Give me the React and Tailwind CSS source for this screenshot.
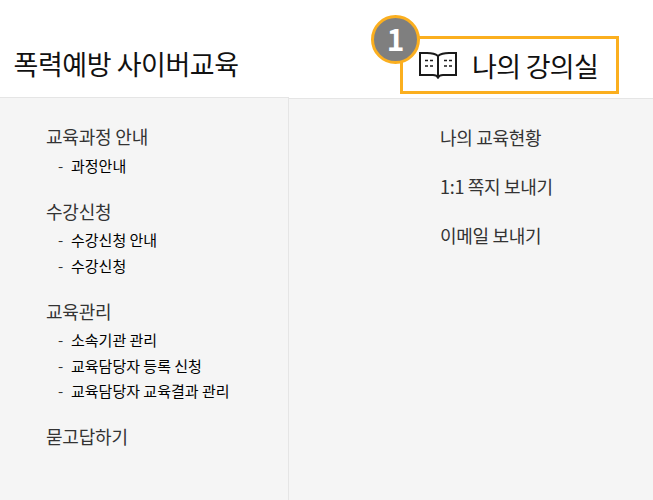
const FONT = "font-['Noto_Sans_CJK_KR','Noto_Sans',sans-serif]";

const GROUPS = [
  { title: "교육과정 안내", items: ["과정안내"] },
  { title: "수강신청", items: ["수강신청 안내", "수강신청"] },
  { title: "교육관리", items: ["소속기관 관리", "교육담당자 등록 신청", "교육담당자 교육결과 관리"] },
  { title: "묻고답하기", items: [] },
];

function BookIcon() {
  return (
    <svg width="38" height="27" viewBox="0 0 38 27" fill="none" stroke="#1a1a1a" strokeWidth="2">
      <path d="M19 4 C16 1.5 12 1 8 1 H1 V23 H14 C16 23 18 23.5 19 25.5 C20 23.5 22 23 24 23 H37 V1 H30 C26 1 22 1.5 19 4 Z" />
      <path d="M19 4 V26" />
      <path d="M6 8.5 H9 M11 8.5 H14 M6 14 H9 M11 14 H14 M25 8.5 H28 M30 8.5 H33 M25 14 H28 M30 14 H33" strokeWidth="1.6" />
    </svg>
  );
}

export default function App() {
  return (
    <div className={`relative grid h-[500px] w-[653px] grid-cols-[289px_364px] overflow-hidden bg-white ${FONT}`}>
      <div className="flex flex-col">
        <div className="flex h-[97px] items-center pl-[13.5px] pt-[30px]">
          <h1 className="text-[27px] leading-none font-normal tracking-[-0.45px] text-[#111]">폭력예방 사이버교육</h1>
        </div>
        <div className="flex-1 border-t border-r border-[#e5e5e5] bg-[#f5f5f5] pl-[46px] pt-[26px]">
          {GROUPS.map((g) => (
            <div key={g.title} className="mb-[20px]">
              <div className="text-[18px] leading-[24px] tracking-[-0.2px] text-[#333]">{g.title}</div>
              <ul className="mt-[5px]">
                {g.items.map((item) => (
                  <li key={item} className="flex h-[25.5px] items-center pl-[12px] text-[15px] text-black">
                    <span className="w-[13px] text-[#333]">-</span>
                    {item}
                  </li>
                ))}
              </ul>
            </div>
          ))}
        </div>
      </div>
      <div className="flex flex-col">
        <div className="flex h-[98px] items-start pl-[111px] pt-[36px]">
          <div className="flex h-[58px] w-[219px] items-center border-[3px] border-[#fbaf1f] pl-[16px]">
            <BookIcon />
            <span className="ml-[15px] text-[27px] leading-none tracking-[-0.7px] text-[#111]">나의 강의실</span>
          </div>
        </div>
        <div className="flex-1 border-t border-[#e5e5e5] bg-[#f5f5f5] pl-[151px] pt-[26px]">
          {["나의 교육현황", "1:1 쪽지 보내기", "이메일 보내기"].map((t) => (
            <div key={t} className="mb-[25px] text-[18px] leading-[24px] tracking-[-0.3px] text-[#333]">{t}</div>
          ))}
        </div>
      </div>
      <div className="absolute left-[371px] top-[15px] flex h-[49px] w-[49px] items-center justify-center rounded-full border-[3px] border-[#fbaf1f] bg-[#7f7f7f] pb-[3px] text-[30px] font-bold leading-none text-white">
        1
      </div>
    </div>
  );
}
